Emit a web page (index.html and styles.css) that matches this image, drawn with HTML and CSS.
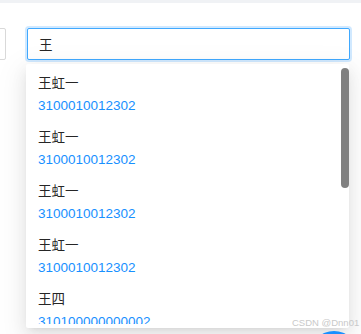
FILE: index.html
```html
<!DOCTYPE html>
<html lang="zh-CN">
<head>
    <meta charset="UTF-8">
    <meta name="viewport" content="width=device-width, initial-scale=1.0">
    <title>人员搜索</title>
    <link rel="stylesheet" href="styles.css">
</head>
<body>
    <div class="topbar"></div>
    <div class="form-row">
        <div class="field field-prev"></div>
        <div class="search-wrap">
            <input class="field field-search" type="text" value="王">
            <div class="dropdown">
                <ul class="options" id="options"></ul>
                <div class="scroll-thumb"></div>
            </div>
        </div>
    </div>
    <div class="watermark">CSDN @Dnn01</div>
    <div class="float-btn"></div>

    <script>
        // Options (only the ones in view)
        const people = [
            { name: '王虹一', code: '3100010012302' },
            { name: '王虹一', code: '3100010012302' },
            { name: '王虹一', code: '3100010012302' },
            { name: '王虹一', code: '3100010012302' },
            { name: '王四', code: '310100000000002' }
        ];

        const list = document.getElementById('options');
        people.forEach(p => {
            const li = document.createElement('li');
            li.className = 'option';
            li.innerHTML = `<div class="name">${p.name}</div><div class="code">${p.code}</div>`;
            list.appendChild(li);
        });
    </script>
</body>
</html>
```

FILE: styles.css
```css
/* Basic Reset */
* {
    margin: 0;
    padding: 0;
    box-sizing: border-box;
}

html, body {
    height: 334px;
    overflow: hidden;
}

body {
    background: #fff;
    font-family: "Liberation Sans", "Noto Sans CJK SC", sans-serif;
    font-size: 13.5px;
    color: #262626;
    position: relative;
}

/* Top strip */
.topbar {
    height: 3px;
    background: #f0f2f5;
}

/* Form row */
.form-row {
    display: flex;
    gap: 21px;
    padding-top: 25px;
}

.field {
    height: 32px;
    border: 1px solid #d9d9d9;
    border-radius: 2px;
    background: #fff;
}

.field-prev {
    width: 120px;
    margin-left: -114px;
}

.search-wrap {
    position: relative;
    width: 323px;
}

.field-search {
    display: block;
    width: 100%;
    padding: 0 11px;
    font: inherit;
    color: #262626;
    border-color: #40a9ff;
    box-shadow: 0 0 0 2px rgba(24, 144, 255, 0.2);
    outline: none;
}

/* Dropdown */
.dropdown {
    position: absolute;
    top: 36px;
    left: -1px;
    width: 323px;
    height: 264px;
    padding: 4px 0;
    background: #fff;
    border-radius: 2px;
    box-shadow: 0 3px 6px -4px rgba(0,0,0,0.12), 0 6px 16px 0 rgba(0,0,0,0.08), 0 9px 28px 8px rgba(0,0,0,0.05);
}

.options {
    list-style: none;
    height: 256px;
    overflow: hidden;
}

.scroll-thumb {
    position: absolute;
    top: 4px;
    right: 0;
    width: 8px;
    height: 120px;
    background: #808080;
    border-radius: 4px;
}

.option {
    padding: 5px 12px;
    line-height: 22px;
}

.option .code {
    color: #1890ff;
}

/* Overlay bits */
.watermark {
    position: absolute;
    left: 292px;
    top: 317px;
    font-size: 9.5px;
    color: #c9c9c9;
    white-space: nowrap;
}

.float-btn {
    position: absolute;
    left: 310px;
    top: 331px;
    width: 48px;
    height: 48px;
    border-radius: 50%;
    background: #1890ff;
}
```
